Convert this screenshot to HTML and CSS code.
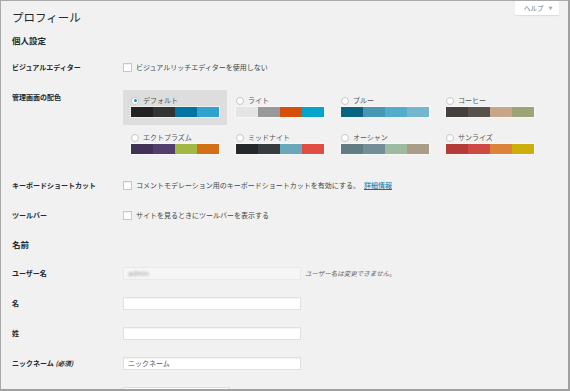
FILE: index.html
```html
<!DOCTYPE html>
<html lang="ja">
    <head>
        <meta charset="UTF-8">
        <meta name="viewport" content="width=device-width, initial-scale=1.0">
        <title>プロフィール</title>
        <link rel="stylesheet" href="styles.css">
    </head>
    <body>
        <div class="frame">
            <div class="helpTab">
                <span>ヘルプ</span>
                <span class="caret">▼</span>
            </div>
            <div class="wrap">
                <h1 class="title">プロフィール</h1>
                <h2 class="section">個人設定</h2>

                <div class="row">
                    <div class="label">ビジュアルエディター</div>
                    <div class="field">
                        <label class="check"><span class="box"></span>ビジュアルリッチエディターを使用しない</label>
                    </div>
                </div>

                <div class="row">
                    <div class="label">管理画面の配色</div>
                    <div class="field">
                        <div class="schemes">
                            <div class="scheme selected">
                                <div class="schemeName"><span class="radio on"></span>デフォルト</div>
                                <div class="palette"><span class="c1"></span><span class="c2"></span><span class="c3"></span><span class="c4"></span></div>
                            </div>
                            <div class="scheme light">
                                <div class="schemeName"><span class="radio"></span>ライト</div>
                                <div class="palette"><span class="c1"></span><span class="c2"></span><span class="c3"></span><span class="c4"></span></div>
                            </div>
                            <div class="scheme blue">
                                <div class="schemeName"><span class="radio"></span>ブルー</div>
                                <div class="palette"><span class="c1"></span><span class="c2"></span><span class="c3"></span><span class="c4"></span></div>
                            </div>
                            <div class="scheme coffee">
                                <div class="schemeName"><span class="radio"></span>コーヒー</div>
                                <div class="palette"><span class="c1"></span><span class="c2"></span><span class="c3"></span><span class="c4"></span></div>
                            </div>
                            <div class="scheme ectoplasm">
                                <div class="schemeName"><span class="radio"></span>エクトプラズム</div>
                                <div class="palette"><span class="c1"></span><span class="c2"></span><span class="c3"></span><span class="c4"></span></div>
                            </div>
                            <div class="scheme midnight">
                                <div class="schemeName"><span class="radio"></span>ミッドナイト</div>
                                <div class="palette"><span class="c1"></span><span class="c2"></span><span class="c3"></span><span class="c4"></span></div>
                            </div>
                            <div class="scheme ocean">
                                <div class="schemeName"><span class="radio"></span>オーシャン</div>
                                <div class="palette"><span class="c1"></span><span class="c2"></span><span class="c3"></span><span class="c4"></span></div>
                            </div>
                            <div class="scheme sunrise">
                                <div class="schemeName"><span class="radio"></span>サンライズ</div>
                                <div class="palette"><span class="c1"></span><span class="c2"></span><span class="c3"></span><span class="c4"></span></div>
                            </div>
                        </div>
                    </div>
                </div>

                <div class="row">
                    <div class="label">キーボードショートカット</div>
                    <div class="field">
                        <label class="check"><span class="box"></span>コメントモデレーション用のキーボードショートカットを有効にする。 <a href="#" class="link">詳細情報</a></label>
                    </div>
                </div>

                <div class="row">
                    <div class="label">ツールバー</div>
                    <div class="field">
                        <label class="check"><span class="box"></span>サイトを見るときにツールバーを表示する</label>
                    </div>
                </div>

                <h2 class="section sectionName">名前</h2>

                <div class="row">
                    <div class="label">ユーザー名</div>
                    <div class="field inline">
                        <div class="input disabled"><span class="blurred">admin</span></div>
                        <span class="description">ユーザー名は変更できません。</span>
                    </div>
                </div>

                <div class="row">
                    <div class="label">名</div>
                    <div class="field"><div class="input"></div></div>
                </div>

                <div class="row">
                    <div class="label">姓</div>
                    <div class="field"><div class="input"></div></div>
                </div>

                <div class="row">
                    <div class="label">ニックネーム <span class="required">(必須)</span></div>
                    <div class="field"><div class="input">ニックネーム</div></div>
                </div>

                <div class="row">
                    <div class="label">ブログ上の表示名</div>
                    <div class="field">
                        <div class="select"><span>ニックネーム</span><span class="caret">▼</span></div>
                    </div>
                </div>
            </div>
        </div>
    </body>
</html>
```

FILE: styles.css
```css
* {
    box-sizing: border-box;
}
body {
    margin: 0;
    font-family: "Noto Sans CJK JP", "Noto Sans", sans-serif;
    color: #23282d;
}
.frame {
    width: 570px;
    height: 391px;
    background-color: #f1f1f1;
    border-top: 1px solid #a9a9a9;
    border-left: 1px solid #a9a9a9;
    border-right: 2px solid #a0a0a0;
    border-bottom: 2px solid #a0a0a0;
    overflow: hidden;
}
.helpTab {
    float: right;
    width: 44px;
    height: 14px;
    margin-right: 9px;
    padding-left: 9px;
    display: flex;
    align-items: center;
    gap: 5px;
    background-color: #fff;
    box-shadow: 0 1px 1px rgba(0, 0, 0, 0.08);
    font-size: 6.5px;
    color: #72777c;
}
.helpTab .caret {
    font-size: 4px;
    color: #a0a5aa;
}
.wrap {
    padding-left: 11px;
}
.title {
    margin: 9px 0 0;
    font-size: 11.5px;
    line-height: 15px;
    font-weight: 400;
}
.section {
    margin: 9px 0 6px;
    font-size: 8.5px;
    line-height: 12px;
    font-weight: 700;
}
.sectionName {
    margin: 8px 0 8px;
}
.row {
    display: grid;
    grid-template-columns: 111px 1fr;
    align-items: start;
    padding: 8px 0;
}
.label {
    font-size: 7px;
    line-height: 14px;
    font-weight: 700;
}
.required {
    font-style: italic;
    font-size: 6.5px;
}
.field {
    font-size: 7px;
    line-height: 14px;
    color: #444;
    min-height: 14px;
    display: flex;
    align-items: center;
}
.inline {
    gap: 4px;
}
.check {
    display: flex;
    align-items: center;
    gap: 4px;
}
.box {
    width: 9px;
    height: 9px;
    background-color: #fff;
    border: 1px solid #c8c8c8;
    box-shadow: inset 0 1px 1px rgba(0, 0, 0, 0.06);
}
.link {
    color: #0073aa;
    text-decoration: underline;
}
.schemes {
    display: grid;
    grid-template-columns: repeat(4, 105px);
    row-gap: 2px;
}
.scheme {
    height: 35px;
    padding: 5px 8px 8px;
}
.scheme.selected {
    width: 104px;
    background-color: #dddddd;
}
.schemeName {
    display: flex;
    align-items: center;
    gap: 4px;
    height: 11px;
    margin-bottom: 1px;
    font-size: 7px;
    line-height: 11px;
    color: #555;
}
.radio {
    width: 8px;
    height: 8px;
    border-radius: 50%;
    border: 1px solid #c8c8c8;
    background-color: #fff;
    display: flex;
    align-items: center;
    justify-content: center;
}
.radio.on::after {
    content: "";
    width: 3px;
    height: 3px;
    border-radius: 50%;
    background-color: #1e8cbe;
}
.palette {
    display: flex;
    width: 88px;
    height: 10px;
    box-shadow: 0 0 0 1px rgba(255, 255, 255, 0.5);
}
.palette span {
    flex: 1;
}
.selected .c1 { background-color: #222; }
.selected .c2 { background-color: #333; }
.selected .c3 { background-color: #0074a2; }
.selected .c4 { background-color: #2ea2cc; }
.light .c1 { background-color: #e5e5e5; }
.light .c2 { background-color: #999; }
.light .c3 { background-color: #d64e07; }
.light .c4 { background-color: #04a4cc; }
.blue .c1 { background-color: #096484; }
.blue .c2 { background-color: #4796b3; }
.blue .c3 { background-color: #52accc; }
.blue .c4 { background-color: #74b6ce; }
.coffee .c1 { background-color: #46403c; }
.coffee .c2 { background-color: #59524c; }
.coffee .c3 { background-color: #c7a589; }
.coffee .c4 { background-color: #9ea476; }
.ectoplasm .c1 { background-color: #413256; }
.ectoplasm .c2 { background-color: #523f6d; }
.ectoplasm .c3 { background-color: #a3b745; }
.ectoplasm .c4 { background-color: #d46f15; }
.midnight .c1 { background-color: #25282b; }
.midnight .c2 { background-color: #363b3f; }
.midnight .c3 { background-color: #69a8bb; }
.midnight .c4 { background-color: #e14d43; }
.ocean .c1 { background-color: #627c83; }
.ocean .c2 { background-color: #738e96; }
.ocean .c3 { background-color: #9ebaa0; }
.ocean .c4 { background-color: #aa9d88; }
.sunrise .c1 { background-color: #b43c38; }
.sunrise .c2 { background-color: #cf4944; }
.sunrise .c3 { background-color: #dd823b; }
.sunrise .c4 { background-color: #ccaf0b; }
.input {
    width: 178px;
    height: 13px;
    padding: 0 4px;
    display: flex;
    align-items: center;
    background-color: #fff;
    border: 1px solid #e0e0e0;
    box-shadow: inset 0 1px 1px rgba(0, 0, 0, 0.05);
    font-size: 7px;
    color: #555;
}
.input.disabled {
    background-color: #f6f6f6;
    border-color: #e9e9e9;
    box-shadow: none;
}
.blurred {
    color: #999;
    filter: blur(0.8px);
}
.description {
    font-style: italic;
    font-size: 6.5px;
    color: #666;
}
.select {
    width: 107px;
    height: 13px;
    padding: 0 6px 0 4px;
    display: flex;
    align-items: center;
    justify-content: space-between;
    background-color: #fff;
    border: 1px solid #ddd;
    font-size: 7px;
    color: #555;
}
.select .caret {
    font-size: 4px;
    color: #777;
}
```
